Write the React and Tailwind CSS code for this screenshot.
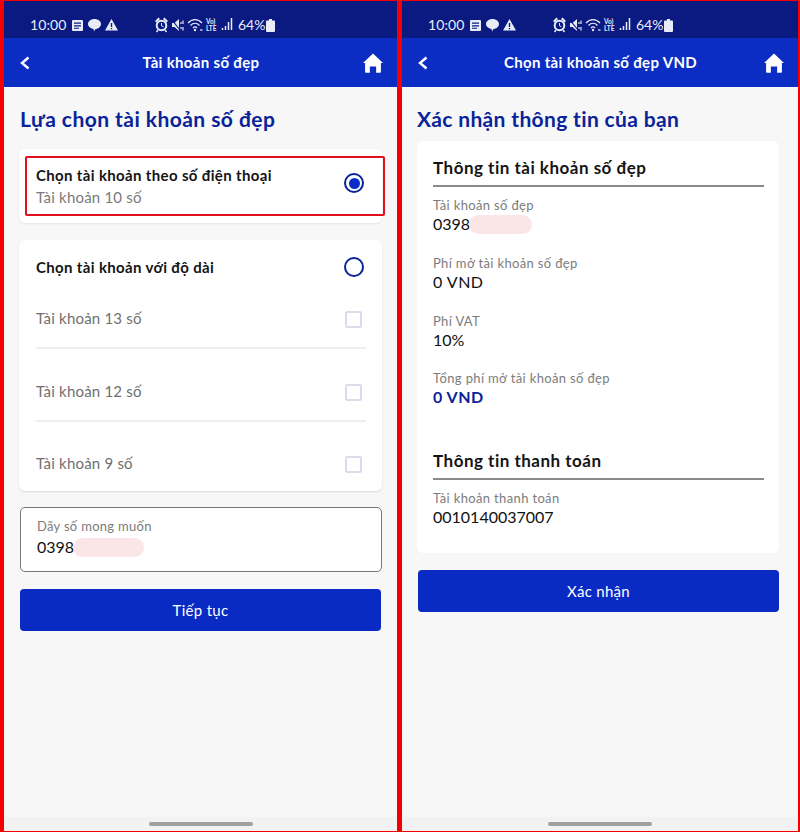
import React from "react";

const font = { fontFamily: "Lato, 'Noto Sans', sans-serif" };

const StatusIcons = () => (
  <svg width="78" height="16" viewBox="0 0 78 16" fill="currentColor">
    {/* alarm */}
    <circle cx="6.500" cy="8.500" r="4.800" fill="none" stroke="currentColor" strokeWidth="2" />
    <path d="M0 4l3.500-3.500L5 2 1.500 5.500zM13 4L9.500.5 8 2l3.500 3.500z" />
    <path d="M6.500 6v2.800l2 1" fill="none" stroke="currentColor" strokeWidth="1" />
    <path d="M3 13l-1.500 2M10 13l1.500 2" stroke="currentColor" strokeWidth="1.500" />
    {/* mute */}
    <path d="M17 6h2.500L24 2v12l-4.500-4H17z" />
    <path d="M17 3l8 10" stroke="#0a1a80" strokeWidth="1.200" />
    <path d="M26 5v2M26 10v2M28 3.500v3.500M28 10v3.500" stroke="currentColor" strokeWidth="1.200" />
    {/* wifi */}
    <path d="M33 6c4-4.500 10-4.500 14 0M35.500 8.500c2.700-3 6.300-3 9 0M38 11c1.300-1.500 2.700-1.500 4 0" fill="none" stroke="currentColor" strokeWidth="1.200" />
    <circle cx="40" cy="13" r="1.200" />
    <path d="M45 13h2.500" stroke="currentColor" strokeWidth="1.200" />
    {/* volte */}
    <text x="51" y="7" fontSize="6.500" fontWeight="700" fontFamily="Lato, sans-serif">Vo)</text>
    <text x="51" y="13.500" fontSize="6.500" fontWeight="700" fontFamily="Lato, sans-serif">LTE</text>
    {/* signal */}
    <path d="M67.500 13v-2M70.500 13v-4M73.500 13v-8M76.500 13V1" stroke="currentColor" strokeWidth="1.500" />
  </svg>
);

const StatusBar = () => (
  <div className="h-[37px] bg-[#0a1a80] flex items-center pl-[26px] text-[#e8ecf8] shrink-0 pt-[11px]">
    <span className="text-[14px] leading-none w-[42px] tracking-[0.1px]">10:00</span>
    <svg width="11" height="11" viewBox="0 0 11 11" fill="currentColor">
      <path fillRule="evenodd" d="M0 1a1 1 0 011-1h9a1 1 0 011 1v9a1 1 0 01-1 1H1a1 1 0 01-1-1zm2 1.500v1.200h7V2.500zm0 2.800v1.200h7V5.300zm0 2.500v1h5v-1z" />
    </svg>
    <svg width="13" height="13" viewBox="0 0 13 13" className="ml-[5px]" fill="currentColor">
      <path d="M6.500 0C10 0 13 2.200 13 5s-3 5-5.500 5l-1.500 2.500-.5-2.600C2.500 9.500 0 7.600 0 5c0-2.800 3-5 6.500-5z" />
    </svg>
    <svg width="13" height="12" viewBox="0 0 13 12" className="ml-[4px]" fill="currentColor">
      <path fillRule="evenodd" d="M6.500 0L13 11.500H0zM5.800 4v4h1.400V4zm0 5v1.300h1.400V9z" />
    </svg>
    <div className="ml-[37px] flex">
      <StatusIcons />
    </div>
    <span className="text-[14px] leading-none ml-[5px] w-[27px] whitespace-nowrap">64%</span>
    <svg width="9" height="13" viewBox="0 0 9 13" className="ml-[1px]" fill="currentColor">
      <path d="M3 0h3v1.500h2a1 1 0 011 1V12a1 1 0 01-1 1H1a1 1 0 01-1-1V2.500a1 1 0 011-1h2z" />
    </svg>
  </div>
);

const Header = ({ title }) => (
  <div className="h-[49px] bg-[#0b2dc4] flex items-center justify-between pl-[15px] pr-[14px] text-white shrink-0">
    <div className="w-[20px]">
      <svg width="12" height="14" viewBox="0 0 12 14" fill="none" stroke="currentColor" strokeWidth="2.400">
        <path d="M9.500 1.500L3 7l6.500 5.500" />
      </svg>
    </div>
    <span className="text-[15px] font-bold tracking-[0.33px]">{title}</span>
    <svg width="20" height="20" viewBox="0 0 21 21" fill="currentColor">
      <path fillRule="evenodd" d="M10.500 0.500L21 10.500h-2.200V20a.8.8 0 01-.8.8h-4.200v-6.500H7.200v6.500H3a.8.8 0 01-.8-.8v-9.500H0z" />
    </svg>
  </div>
);

const HomeBar = () => (
  <div className="h-[14px] bg-[#f2f2f2] flex justify-center items-center shrink-0">
    <div className="w-[104px] h-[4px] rounded-full bg-[#a0a0a0]" />
  </div>
);

const Hidden = ({ w }) => (
  <span className={`inline-block h-[19px] rounded-full bg-[#fae6e6] -ml-px ${w}`} />
);

const Check = () => (
  <span className="w-[17px] h-[17px] mt-[2px] rounded-[2px] border-2 border-[#d9dcec] bg-white shrink-0" />
);

const OptionRow = ({ label }) => (
  <div className="h-[72px] pt-[14px] flex items-center justify-between pr-[4px] text-[15px] tracking-[0.2px] text-[#6f6f6f]">
    <span>{label}</span>
    <Check />
  </div>
);

const Button = ({ children }) => (
  <button className="w-full h-[42px] rounded-[4px] bg-[#0a2ac4] text-white text-[15px] tracking-[0.3px]">
    {children}
  </button>
);

const Field = ({ label, children, className = "" }) => (
  <div className={className}>
    <div className="text-[13px] leading-[18px] tracking-[0.35px] text-[#7c7c7c]">{label}</div>
    <div className="text-[16px] leading-[20px] text-[#111] flex items-center">{children}</div>
  </div>
);

const SelectScreen = () => (
  <div className="flex-1 flex flex-col bg-[#f7f7f7] px-[16px] min-w-0">
    <h1 className="text-[21px] font-bold tracking-[0.45px] text-[#0a2399] leading-[28px] mt-[18px]">
      Lựa chọn tài khoản số đẹp
    </h1>
    <div className="relative h-[74px] mt-[16px] -mx-px bg-white rounded-[6px] shadow-[0_1px_2px_rgba(0,0,0,0.08)] flex items-center justify-between pl-[17px] pr-[18px]">
      <div>
        <div className="text-[15px] font-bold tracking-[0.35px] text-[#151515] leading-[22px]">
          Chọn tài khoản theo số điện thoại
        </div>
        <div className="text-[15px] tracking-[0.2px] text-[#7a7a7a] leading-[22px]">Tài khoản 10 số</div>
      </div>
      <span className="w-[20px] h-[20px] -mt-[6px] rounded-full border-2 border-[#0a2399] flex items-center justify-center">
        <span className="w-[11px] h-[11px] rounded-full bg-[#0b2dc4]" />
      </span>
      {/* annotation frame */}
      <div className="absolute left-[6px] -right-[3px] top-[7px] h-[60px] border-2 border-[#e0101c] rounded-[2px]" />
    </div>

    <div className="mt-[17px] -mx-px h-[251px] bg-white rounded-[6px] shadow-[0_1px_2px_rgba(0,0,0,0.12)] pl-[17px] pr-[16px] pt-[16px]">
      <div className="h-[22px] flex items-center justify-between pr-[2px]">
        <span className="text-[15px] font-bold tracking-[0.35px] text-[#151515]">Chọn tài khoản với độ dài</span>
        <span className="w-[20px] h-[20px] -mt-[1px] rounded-full border-2 border-[#0a2399]" />
      </div>
      <div className="-mt-[3px]">
        <div className="border-b-2 border-[#eeeeee]">
          <OptionRow label="Tài khoản 13 số" />
        </div>
        <div className="border-b-2 border-[#eeeeee] -mt-[1px]">
          <OptionRow label="Tài khoản 12 số" />
        </div>
        <div className="-mt-[2px]">
          <OptionRow label="Tài khoản 9 số" />
        </div>
      </div>
    </div>

    <div className="mt-[16px] -mr-px h-[65px] rounded-[5px] border border-[#777] bg-white pl-[16px] pt-[9px]">
      <div className="text-[13px] leading-[18px] tracking-[0.3px] text-[#7c7c7c]">Dãy số mong muốn</div>
      <div className="mt-[2px] text-[16px] leading-[20px] text-[#111] flex items-center">
        0398
        <Hidden w="w-[71px]" />
      </div>
    </div>

    <div className="mt-[17px]">
      <Button>Tiếp tục</Button>
    </div>
  </div>
);

const ConfirmScreen = () => (
  <div className="flex-1 flex flex-col bg-[#f7f7f7] px-[15px] min-w-0">
    <h1 className="text-[21px] font-bold tracking-[0.35px] text-[#0a2399] leading-[28px] mt-[18px]">
      Xác nhận thông tin của bạn
    </h1>
    <div className="mt-[8px] mr-[4px] h-[412px] bg-white rounded-[6px] pl-[16px] pr-[15px] pt-[16px]">
      <h2 className="text-[17px] font-bold tracking-[0.5px] text-[#151515] leading-[22px]">Thông tin tài khoản số đẹp</h2>
      <div className="mt-[6px] h-[2px] bg-[#8a8a8a]" />
      <Field label="Tài khoản số đẹp" className="mt-[9px]">
        0398
        <Hidden w="w-[63px]" />
      </Field>
      <Field label="Phí mở tài khoản số đẹp" className="mt-[20px]">
        <span className="tracking-[0.5px]">0 VND</span>
      </Field>
      <Field label="Phí VAT" className="mt-[20px]">10%</Field>
      <div className="mt-[19px]">
        <div className="text-[13px] leading-[18px] tracking-[0.35px] text-[#7c7c7c]">Tổng phí mở tài khoản số đẹp</div>
        <div className="text-[16px] leading-[20px] tracking-[0.5px] font-bold text-[#0a2399]">0 VND</div>
      </div>
      <h2 className="mt-[43px] text-[17px] font-bold tracking-[0.5px] text-[#151515] leading-[22px]">Thông tin thanh toán</h2>
      <div className="mt-[6px] h-[2px] bg-[#8a8a8a]" />
      <Field label="Tài khoản thanh toán" className="mt-[9px]">0010140037007</Field>
    </div>
    <div className="mt-[17px] mr-[4px] ml-px">
      <Button>Xác nhận</Button>
    </div>
  </div>
);

const Phone = ({ title, width, children }) => (
  <div className={`flex flex-col min-w-0 ${width}`}>
    <StatusBar />
    <Header title={title} />
    {children}
    <HomeBar />
  </div>
);

export default function App() {
  return (
    <div style={font} className="w-[800px] h-[832px] bg-[#f50000] flex gap-[5px] pl-[4px] pt-px pb-[1px]">
      <Phone title="Tài khoản số đẹp" width="w-[393px]">
        <SelectScreen />
      </Phone>
      <Phone title="Chọn tài khoản số đẹp VND" width="w-[396px]">
        <ConfirmScreen />
      </Phone>
    </div>
  );
}
